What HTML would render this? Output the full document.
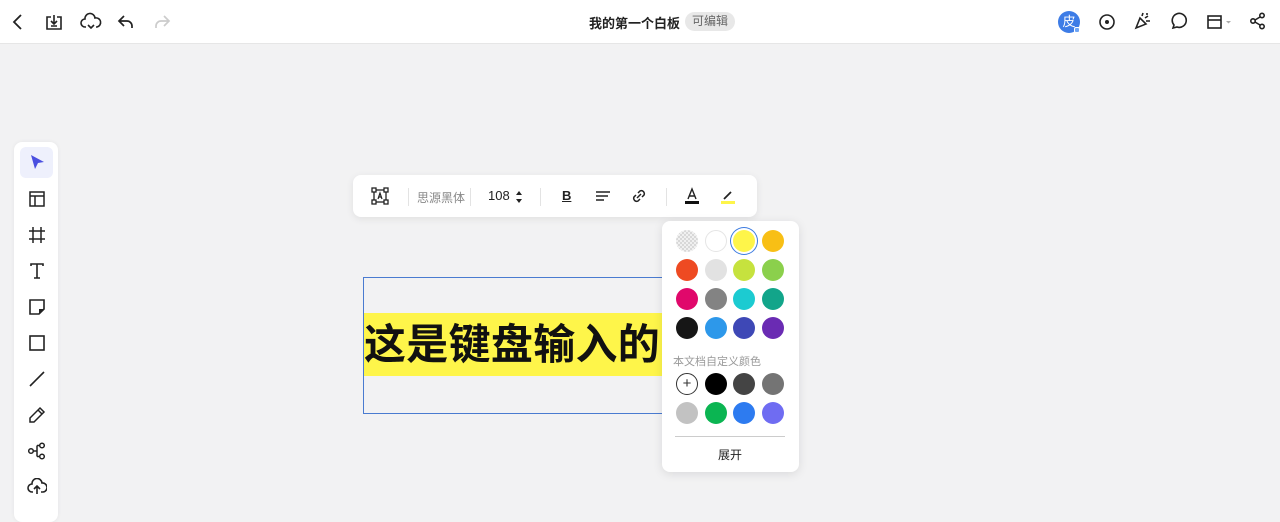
<!DOCTYPE html>
<html><head><meta charset="utf-8"><style>
*{margin:0;padding:0;box-sizing:border-box}
body{width:1280px;height:505px;overflow:hidden;background:#f2f2f3;font-family:"Liberation Sans","Noto Sans CJK SC",sans-serif;position:relative;color:#222}
.top{position:absolute;left:0;top:0;width:1280px;height:44px;background:#fff;border-bottom:1px solid #e6e6e6}
.ic{position:absolute}
svg{display:block}
.title{position:absolute;left:589px;top:13px;font-size:13px;font-weight:bold;color:#222}
.tag{position:absolute;left:685px;top:12px;height:19px;padding:0 7px;background:#e8e8e8;border-radius:10px;font-size:12px;color:#666;line-height:19px}
.side{position:absolute;left:14px;top:142px;width:44px;height:380px;background:#fff;border-radius:8px;box-shadow:0 0 4px rgba(0,0,0,.06)}
.sel{position:absolute;left:20px;top:147px;width:33px;height:31px;background:#eef0fc;border-radius:6px}
.tb{position:absolute;left:353px;top:175px;width:404px;height:42px;background:#fff;border-radius:8px;box-shadow:0 2px 8px rgba(0,0,0,.08)}
.sep{position:absolute;top:188px;width:1px;height:18px;background:#e3e3e3}
.box{position:absolute;left:363px;top:277px;width:320px;height:137px;border:1px solid #4a7bd0}
.hl{position:absolute;left:364px;top:313px;width:310px;height:63px;background:#fef54a}
.txt{position:absolute;left:364px;top:318px;font-size:42px;font-weight:bold;color:#111;line-height:54px;white-space:nowrap;letter-spacing:0.3px}
.pal{position:absolute;left:662px;top:221px;width:137px;height:251px;background:#fff;border-radius:8px;box-shadow:0 2px 10px rgba(0,0,0,.1)}
.c{position:absolute;width:22px;height:22px;border-radius:50%}
</style></head><body>
<div class="top"></div>
<svg class="ic" style="left:8px;top:12px" width="20" height="20" viewBox="0 0 20 20"><path d="M13 3 L6 10 L13 17" fill="none" stroke="#222" stroke-width="1.8"/></svg>
<svg class="ic" style="left:44px;top:12px" width="20" height="20" viewBox="0 0 20 20"><path d="M7 5H3v12h14V5h-4M10 3v9M7 9l3 3 3-3M7 14h6" fill="none" stroke="#222" stroke-width="1.6"/></svg>
<svg class="ic" style="left:80px;top:12px" width="22" height="20" viewBox="0 0 22 20"><path d="M6 15H5a4 4 0 0 1 0-8 5 5 0 0 1 10-1 4 4 0 0 1 2 9h-1M8 13l3 3 3-3" fill="none" stroke="#222" stroke-width="1.6"/></svg>
<svg class="ic" style="left:116px;top:12px" width="20" height="20" viewBox="0 0 20 20"><path d="M8 4L3 9l5 5M3 9h8a5 5 0 0 1 5 5v2" fill="none" stroke="#222" stroke-width="1.7"/></svg>
<svg class="ic" style="left:152px;top:12px" width="20" height="20" viewBox="0 0 20 20"><path d="M12 4l5 5-5 5M17 9H9a5 5 0 0 0-5 5v2" fill="none" stroke="#ccc" stroke-width="1.7"/></svg>
<div class="title">我的第一个白板</div>
<div class="tag">可编辑</div>
<div style="position:absolute;left:1058px;top:11px;width:22px;height:22px;border-radius:50%;background:#3d7ce6;color:#fff;font-size:13px;text-align:center;line-height:22px">皮</div>
<div style="position:absolute;left:1074px;top:27px;width:6px;height:6px;background:#6fa5f5;border:1px solid #fff;border-radius:2px"></div>
<svg class="ic" style="left:1097px;top:12px" width="20" height="20" viewBox="0 0 20 20"><circle cx="10" cy="10" r="7" fill="none" stroke="#222" stroke-width="1.6"/><circle cx="10" cy="10" r="2" fill="#222"/></svg>
<svg class="ic" style="left:1133px;top:11px" width="20" height="20" viewBox="0 0 20 20"><path d="M3 17l4-10 6 6zM9 5l1-3M12 7l3-2M13 10h4M14 2v2" fill="none" stroke="#222" stroke-width="1.6"/></svg>
<svg class="ic" style="left:1169px;top:12px" width="20" height="20" viewBox="0 0 20 20"><path d="M4 16l1-3a7 7 0 1 1 3 2z" fill="none" stroke="#222" stroke-width="1.6"/></svg>
<svg class="ic" style="left:1205px;top:12px" width="30" height="20" viewBox="0 0 30 20"><rect x="3" y="4" width="13" height="12" fill="none" stroke="#222" stroke-width="1.6"/><path d="M3 8h13" stroke="#222" stroke-width="1.6"/><path d="M21 9l2.5 2.5L26 9z" fill="#aaa"/></svg>
<svg class="ic" style="left:1248px;top:11px" width="20" height="20" viewBox="0 0 20 20"><circle cx="14" cy="4.5" r="2.2" fill="none" stroke="#222" stroke-width="1.6"/><circle cx="5" cy="10" r="2.2" fill="none" stroke="#222" stroke-width="1.6"/><circle cx="14" cy="15.5" r="2.2" fill="none" stroke="#222" stroke-width="1.6"/><path d="M7 9l5-3M7 11l5 3" stroke="#222" stroke-width="1.6"/></svg>
<div class="side"></div><div class="sel"></div>
<svg class="ic" style="left:29px;top:154px" width="16" height="16" viewBox="0 0 16 16"><path d="M2 1l13 7-6 1-3 6z" fill="#4a4fe0"/></svg>
<svg class="ic" style="left:28px;top:190px" width="18" height="18" viewBox="0 0 18 18"><rect x="2" y="2" width="14" height="14" fill="none" stroke="#222" stroke-width="1.5"/><path d="M2 6h14M7 6v10" stroke="#222" stroke-width="1.5"/></svg>
<svg class="ic" style="left:28px;top:226px" width="18" height="18" viewBox="0 0 18 18"><path d="M5 1v16M13 1v16M1 5h16M1 13h16" stroke="#222" stroke-width="1.5"/></svg>
<svg class="ic" style="left:28px;top:262px" width="18" height="18" viewBox="0 0 18 18"><path d="M3 4V2h12v2M9 2v14M6 16h6" fill="none" stroke="#222" stroke-width="1.6"/></svg>
<svg class="ic" style="left:28px;top:298px" width="18" height="18" viewBox="0 0 18 18"><path d="M2 2h14v9l-5 5H2z" fill="none" stroke="#222" stroke-width="1.6"/><path d="M11 16v-5h5z" fill="#222"/></svg>
<svg class="ic" style="left:28px;top:334px" width="18" height="18" viewBox="0 0 18 18"><rect x="2" y="2" width="14" height="14" fill="none" stroke="#222" stroke-width="1.6"/></svg>
<svg class="ic" style="left:28px;top:370px" width="18" height="18" viewBox="0 0 18 18"><path d="M2 16L16 2" stroke="#222" stroke-width="1.6"/></svg>
<svg class="ic" style="left:28px;top:406px" width="18" height="18" viewBox="0 0 18 18"><path d="M12 2l4 4-10 10H2v-4zM10 4l4 4" fill="none" stroke="#222" stroke-width="1.5"/></svg>
<svg class="ic" style="left:27px;top:442px" width="20" height="18" viewBox="0 0 20 18"><circle cx="4" cy="9" r="2.3" fill="none" stroke="#222" stroke-width="1.5"/><circle cx="15" cy="3.5" r="2.3" fill="none" stroke="#222" stroke-width="1.5"/><circle cx="15" cy="14.5" r="2.3" fill="none" stroke="#222" stroke-width="1.5"/><path d="M6.3 9h3M10 3.5h2.7M10 14.5h2.7M10 3.5v11" fill="none" stroke="#222" stroke-width="1.5"/></svg>
<svg class="ic" style="left:27px;top:478px" width="20" height="18" viewBox="0 0 20 18"><path d="M6 14H5a4 4 0 0 1 0-8 5 5 0 0 1 10-1 4 4 0 0 1 1 9h-2M10 16V9M7 11l3-3 3 3" fill="none" stroke="#222" stroke-width="1.6"/></svg>
<div class="tb"></div>
<svg class="ic" style="left:371px;top:187px" width="18" height="18" viewBox="0 0 18 18"><rect x="3" y="3" width="12" height="12" fill="none" stroke="#222" stroke-width="1.3"/><rect x="1" y="1" width="4" height="4" fill="#fff" stroke="#222" stroke-width="1.3"/><rect x="13" y="1" width="4" height="4" fill="#fff" stroke="#222" stroke-width="1.3"/><rect x="1" y="13" width="4" height="4" fill="#fff" stroke="#222" stroke-width="1.3"/><rect x="13" y="13" width="4" height="4" fill="#fff" stroke="#222" stroke-width="1.3"/><path d="M7 12l2-6 2 6M7.7 10h2.6" fill="none" stroke="#222" stroke-width="1.2"/></svg>
<div class="sep" style="left:408px"></div>
<div style="position:absolute;left:417px;top:189px;font-size:12px;color:#888">思源黑体</div>
<div class="sep" style="left:470px"></div>
<div style="position:absolute;left:488px;top:188px;font-size:13px;color:#222">108</div>
<svg class="ic" style="left:514px;top:189px" width="10" height="16" viewBox="0 0 10 16"><path d="M2 6l3-4 3 4zM2 10l3 4 3-4z" fill="#222"/></svg>
<div class="sep" style="left:540px"></div>
<div style="position:absolute;left:562px;top:188px;font-size:13px;font-weight:bold;color:#222;text-decoration:underline">B</div>
<svg class="ic" style="left:594px;top:188px" width="18" height="16" viewBox="0 0 18 16"><path d="M2 4h14M2 8h12M2 12h8" stroke="#222" stroke-width="1.5"/></svg>
<svg class="ic" style="left:630px;top:187px" width="18" height="18" viewBox="0 0 18 18"><path d="M8 6l2-2a3 3 0 0 1 4 4l-2 2M10 12l-2 2a3 3 0 0 1-4-4l2-2M7 11l4-4" fill="none" stroke="#222" stroke-width="1.5"/></svg>
<div class="sep" style="left:666px"></div>
<svg class="ic" style="left:683px;top:186px" width="18" height="20" viewBox="0 0 18 20"><path d="M5 13L9 3l4 10M6.5 10h5" fill="none" stroke="#222" stroke-width="1.4"/><rect x="2" y="15" width="14" height="3" fill="#111"/></svg>
<svg class="ic" style="left:719px;top:186px" width="18" height="20" viewBox="0 0 18 20"><path d="M5 13l7-7" stroke="#222" stroke-width="1.8"/><rect x="2" y="15" width="14" height="3" fill="#fef54a"/></svg>
<div class="box"></div>
<div class="hl"></div>
<div class="txt">这是键盘输入的</div>
<div class="pal"></div>
<svg class="ic" style="left:676px;top:230px" width="22" height="22" viewBox="0 0 22 22"><defs><pattern id="p" width="4" height="4" patternUnits="userSpaceOnUse"><rect width="4" height="4" fill="#f0f0f0"/><rect width="2" height="2" fill="#d8d8d8"/><rect x="2" y="2" width="2" height="2" fill="#d8d8d8"/></pattern></defs><circle cx="11" cy="11" r="11" fill="url(#p)"/></svg>
<div class="c" style="left:705px;top:230px;background:#fff;border:1px solid #e5e5e5"></div>
<div class="c" style="left:733px;top:230px;background:#fef54a;box-shadow:0 0 0 2px #fff,0 0 0 3px #3c7be0"></div>
<div class="c" style="left:762px;top:230px;background:#f8bf15"></div>
<div class="c" style="left:676px;top:259px;background:#ee4a22"></div>
<div class="c" style="left:705px;top:259px;background:#e2e2e2"></div>
<div class="c" style="left:733px;top:259px;background:#c6e23e"></div>
<div class="c" style="left:762px;top:259px;background:#8bd04c"></div>
<div class="c" style="left:676px;top:288px;background:#e0086b"></div>
<div class="c" style="left:705px;top:288px;background:#838383"></div>
<div class="c" style="left:733px;top:288px;background:#1ccbd1"></div>
<div class="c" style="left:762px;top:288px;background:#12a58a"></div>
<div class="c" style="left:676px;top:317px;background:#161616"></div>
<div class="c" style="left:705px;top:317px;background:#2d98ea"></div>
<div class="c" style="left:733px;top:317px;background:#3e48b6"></div>
<div class="c" style="left:762px;top:317px;background:#6a2bb3"></div>
<div style="position:absolute;left:673px;top:353px;font-size:11px;color:#999">本文档自定义颜色</div>
<div class="c" style="left:676px;top:373px;background:#fff;border:1px solid #333;text-align:center;line-height:19px;font-size:15px;color:#333">+</div>
<div class="c" style="left:705px;top:373px;background:#000"></div>
<div class="c" style="left:733px;top:373px;background:#444"></div>
<div class="c" style="left:762px;top:373px;background:#747474"></div>
<div class="c" style="left:676px;top:402px;background:#c2c2c2"></div>
<div class="c" style="left:705px;top:402px;background:#0bb552"></div>
<div class="c" style="left:733px;top:402px;background:#2d7bf0"></div>
<div class="c" style="left:762px;top:402px;background:#6f6cf2"></div>
<div style="position:absolute;left:675px;top:436px;width:110px;height:1px;background:#ccc"></div>
<div style="position:absolute;left:718px;top:446px;font-size:12px;color:#222">展开</div>
</body></html>
